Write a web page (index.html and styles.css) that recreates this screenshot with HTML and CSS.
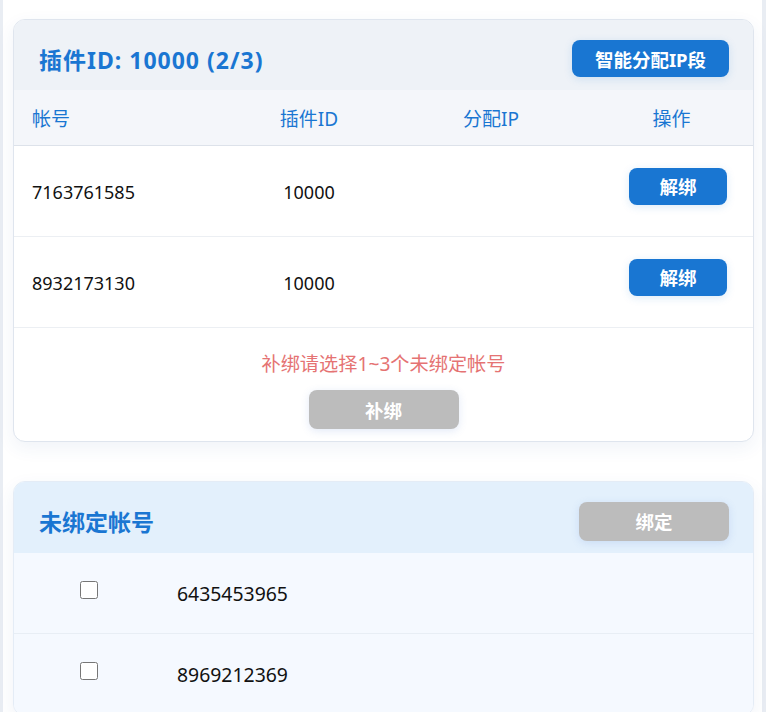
FILE: index.html
```html
<!DOCTYPE html>
<html>
<head>
  <meta charset="utf-8">
  <title>插件绑定</title>
  <link rel="stylesheet" href="styles.css">
</head>
<body>
  <div class="page">
    <div class="panel">
      <div class="panel-head">
        <h2 class="panel-title panel-title-id">插件ID: 10000 (2/3)</h2>
        <button class="btn btn-blue btn-wide">智能分配IP段</button>
      </div>
      <div class="row row-head">
        <div class="cell cell-left">帐号</div>
        <div class="cell">插件ID</div>
        <div class="cell">分配IP</div>
        <div class="cell cell-op">操作</div>
      </div>
      <div class="row">
        <div class="cell cell-left">7163761585</div>
        <div class="cell">10000</div>
        <div class="cell"></div>
        <div class="cell cell-op"><button class="btn btn-blue btn-small">解绑</button></div>
      </div>
      <div class="row">
        <div class="cell cell-left">8932173130</div>
        <div class="cell">10000</div>
        <div class="cell"></div>
        <div class="cell cell-op"><button class="btn btn-blue btn-small">解绑</button></div>
      </div>
      <div class="panel-foot">
        <div class="hint">补绑请选择1~3个未绑定帐号</div>
        <button class="btn btn-gray btn-mid">补绑</button>
      </div>
    </div>

    <div class="panel panel-free">
      <div class="panel-head">
        <h2 class="panel-title">未绑定帐号</h2>
        <button class="btn btn-gray btn-mid">绑定</button>
      </div>
      <div class="free-row">
        <div class="free-check"><input type="checkbox"></div>
        <div class="free-num">6435453965</div>
      </div>
      <div class="free-row">
        <div class="free-check"><input type="checkbox"></div>
        <div class="free-num">8969212369</div>
      </div>
    </div>
  </div>
</body>
</html>
```

FILE: styles.css
```css
html, body {
  margin: 0;
  height: 100%;
}

body {
  background-color: #e9edf3;
  font-family: "Noto Sans", "Noto Sans CJK SC", sans-serif;
  overflow: hidden;
}

.page {
  margin: 0 4px 0 3px;
  min-height: 100%;
  background-color: #fff;
  padding: 19px 8px 0 10px;
  box-sizing: border-box;
}

.panel {
  border: 1px solid #dfe5ee;
  border-radius: 12px;
  background-color: #fff;
  overflow: hidden;
  box-shadow: 0 6px 18px rgba(40, 80, 150, 0.07);
}

.panel + .panel {
  margin-top: 39px;
}

.panel-head {
  display: flex;
  justify-content: space-between;
  align-items: center;
  height: 70px;
  box-sizing: border-box;
  padding: 7px 24px 0 25px;
  background-color: #eef2f7;
}

.panel-title {
  margin: 0;
  font-size: 23px;
  font-weight: bold;
  color: #1a76d2;
}

.panel-title-id {
  letter-spacing: 1px;
}

.btn {
  border: none;
  border-radius: 8px;
  color: #fff;
  font-family: inherit;
  font-size: 18.5px;
  font-weight: bold;
  cursor: pointer;
  padding: 0;
}

.btn-blue {
  background-color: #1976d2;
  box-shadow: 0 2px 8px rgba(25, 118, 210, 0.15);
}

.btn-gray {
  background-color: #bcbcbc;
  box-shadow: 0 2px 8px rgba(60, 110, 200, 0.15);
}

.btn-wide {
  width: 157px;
  height: 37px;
}

.btn-small {
  width: 98px;
  height: 37px;
}

.btn-mid {
  width: 150px;
  height: 39px;
}

.row {
  display: grid;
  grid-template-columns: 204px 182px 182px 1fr;
  align-items: center;
  height: 90px;
  border-bottom: 1px solid #eceff3;
  font-size: 18px;
  color: #111;
}

.row-head {
  height: 55px;
  background-color: #f4f6fa;
  border-bottom-color: #dde2ea;
  color: #1a76d2;
  font-size: 19px;
}

.row:not(.row-head) .cell {
  padding-top: 2px;
}

.cell {
  text-align: center;
}

.cell-left {
  text-align: left;
  padding-left: 18px;
}

.row .cell-op {
  padding: 0 0 12px 21px;
}

.row.row-head .cell-op {
  padding: 0 0 0 8px;
}

.panel-foot {
  display: flex;
  flex-direction: column;
  align-items: center;
  padding: 21px 0 12px;
}

.hint {
  color: #e57373;
  font-size: 19.2px;
  margin-bottom: 13px;
}

.panel-free {
  border-color: #e4ecf6;
}

.panel-free .panel-head {
  height: 71px;
  background-color: #e3f0fc;
}

.free-row {
  display: flex;
  align-items: center;
  height: 80px;
  background-color: #f5f9ff;
  border-bottom: 1px solid #e8eef5;
  font-size: 19.4px;
  color: #111;
}

.free-check {
  width: 150px;
  display: flex;
  justify-content: center;
}

.free-check input {
  width: 18px;
  height: 18px;
  margin: 0 0 6px 0;
}

.free-num {
  padding-left: 13px;
}
```
